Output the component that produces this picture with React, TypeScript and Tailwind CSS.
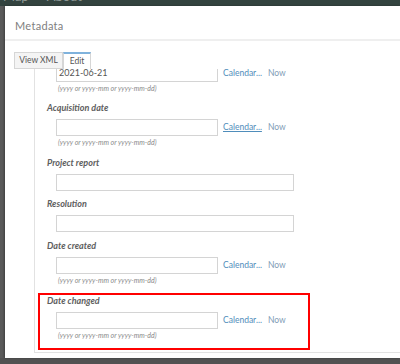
import React from "react";

const font = { fontFamily: "Lato, 'Open Sans', sans-serif" };

function Hint() {
  return (
    <div className="h-[12px] leading-[12px] pl-[2px] text-[7px] italic text-[#8a8a8a]">
      (yyyy or yyyy-mm or yyyy-mm-dd)
    </div>
  );
}

function DateInput({ value, underline }: { value?: string; underline?: boolean }) {
  return (
    <div className="flex items-center h-[17px]">
      <div className="w-[162px] h-[17px] border border-[#d4d4d4] bg-white text-[9px] leading-[12px] pt-[1px] pl-[2px] text-[#555]">
        {value}
      </div>
      <span className={"ml-[5px] text-[8.5px] text-[#4f8dbb] " + (underline ? "underline" : "")}>Calendar...</span>
      <span className="ml-[6px] text-[8.5px] text-[#7f9db6]">Now</span>
    </div>
  );
}

function TextInput() {
  return <div className="w-[238px] h-[17px] border border-[#d4d4d4] bg-white" />;
}

function Label({ children }: { children: React.ReactNode }) {
  return (
    <div className="h-[12px] leading-[12px] text-[9px] font-bold italic text-[#5e5e5e]">{children}</div>
  );
}

export default function App() {
  return (
    <div className="w-[400px] h-[364px] bg-[#525252] overflow-hidden flex flex-col" style={font}>
      <div className="h-[6px] bg-[#33433f] overflow-hidden shrink-0">
        <div className="flex mt-[-10px] pl-[3px] text-[13px] leading-[13px] text-[#8d9794]">
          <span>Map</span>
          <span className="ml-[18px]">About</span>
        </div>
      </div>
      <div className="flex h-[352px] shrink-0">
        <div className="w-[5px] bg-[#5a5a5a]" />
        <div className="flex-1 bg-white flex flex-col shadow-[-1px_0_2px_rgba(0,0,0,0.3)]">
          <div className="h-[35px] pl-[10px] pt-[13px] text-[11px] leading-[14px] tracking-[0.3px] text-[#808080] border-b-2 border-[#efefef]">
            Metadata
          </div>
          <div className="pl-[9px] pt-[11px] flex flex-col flex-1">
            <div className="flex h-[17px] text-[8.5px] text-[#555]">
              <div className="w-[49px] h-[17px] bg-[#f4f4f4] border border-[#d6d6d6] flex items-center justify-center">
                View XML
              </div>
              <div className="w-[28px] h-[17px] bg-white border-x border-[#d6d6d6] border-t-2 border-t-[#7fb2dc] flex items-center justify-center">
                Edit
              </div>
            </div>
            <div className="ml-[20px] h-[284px] border-l border-b border-[#e2e2e2] overflow-hidden">
              <div className="mt-[-4px]">
                <div className="pl-[21px]">
                  <DateInput value="2021-06-21" />
                  <Hint />
                </div>
                <div className="pl-[12px] mt-[8px]">
                  <Label>Acquisition date</Label>
                  <div className="pl-[9px] mt-[5px]">
                    <DateInput underline />
                    <Hint />
                  </div>
                </div>
                <div className="pl-[12px] mt-[9px]">
                  <Label>Project report</Label>
                  <div className="pl-[9px] mt-[5px]">
                    <TextInput />
                  </div>
                </div>
                <div className="pl-[12px] mt-[7px]">
                  <Label>Resolution</Label>
                  <div className="pl-[9px] mt-[5px]">
                    <TextInput />
                  </div>
                </div>
                <div className="pl-[12px] mt-[8px]">
                  <Label>Date created</Label>
                  <div className="pl-[9px] mt-[5px]">
                    <DateInput />
                    <Hint />
                  </div>
                </div>
                <div className="ml-[3px] mt-[7px] w-[272px] border-2 border-[#ff0000] pl-[7px] pb-[7px]">
                  <Label>Date changed</Label>
                  <div className="pl-[9px] mt-[5px]">
                    <DateInput />
                    <Hint />
                  </div>
                </div>
              </div>
            </div>
          </div>
        </div>
      </div>
    </div>
  );
}
